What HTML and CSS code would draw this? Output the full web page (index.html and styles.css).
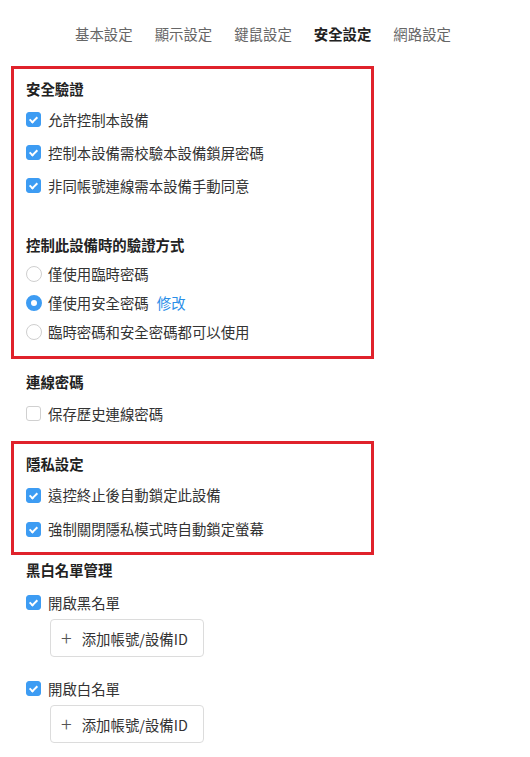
FILE: index.html
```html
<html>
    <head>
        <title>安全設定</title>
        <link rel="stylesheet" href="styles.css">
    </head>
    <body>
        <div class="tabs">
            <span class="tab">基本設定</span>
            <span class="tab">顯示設定</span>
            <span class="tab">鍵鼠設定</span>
            <span class="tab active">安全設定</span>
            <span class="tab">網路設定</span>
        </div>

        <div class="content">
            <!-- security verification -->
            <div class="group marked first">
                <div class="title">安全驗證</div>
                <label class="row"><span class="check on"></span>允許控制本設備</label>
                <label class="row"><span class="check on"></span>控制本設備需校驗本設備鎖屏密碼</label>
                <label class="row"><span class="check on"></span>非同帳號連線需本設備手動同意</label>

                <div class="title second">控制此設備時的驗證方式</div>
                <label class="row radioRow"><span class="radio"></span>僅使用臨時密碼</label>
                <label class="row radioRow"><span class="radio on"></span>僅使用安全密碼<a class="link">修改</a></label>
                <label class="row radioRow"><span class="radio"></span>臨時密碼和安全密碼都可以使用</label>
            </div>

            <!-- connection password -->
            <div class="group plain password">
                <div class="title">連線密碼</div>
                <label class="row"><span class="check"></span>保存歷史連線密碼</label>
            </div>

            <!-- privacy -->
            <div class="group marked privacy">
                <div class="title">隱私設定</div>
                <label class="row tall"><span class="check on"></span>遠控終止後自動鎖定此設備</label>
                <label class="row tall"><span class="check on"></span>強制關閉隱私模式時自動鎖定螢幕</label>
            </div>

            <!-- black / white list -->
            <div class="group plain lists">
                <div class="title">黑白名單管理</div>
                <label class="row"><span class="check on"></span>開啟黑名單</label>
                <div class="addButton"><span class="plus">+</span>添加帳號/設備ID</div>
                <label class="row spaced"><span class="check on"></span>開啟白名單</label>
                <div class="addButton"><span class="plus">+</span>添加帳號/設備ID</div>
            </div>
        </div>
    </body>
</html>
```

FILE: styles.css
```css
body{
    margin: 0;
    background: white;
    color: #333;
    font-family: "Noto Sans CJK TC", "Noto Sans", sans-serif;
    font-size: 14.4px;
}

.tabs{
    display: flex;
    justify-content: center;
    gap: 22px;
    padding-top: 24px;
    padding-right: 4px;
    line-height: 20px;
}

.tab{
    color: #666;
}

.tab.active{
    color: #222;
    font-weight: bold;
}

.content{
    padding-left: 11px;
    margin-top: 22px;
}

.group{
    width: 345px;
    padding-left: 12px;
}

.group.marked{
    border: 3px solid #e0222b;
}

.group.plain{
    border: 3px solid transparent;
}

.group.first{
    padding-top: 10px;
    padding-bottom: 10px;
}

.group.password{
    padding-top: 10px;
    padding-bottom: 8px;
}

.group.password .title{
    margin-bottom: 5px;
}

.group.privacy{
    padding-top: 10px;
    padding-bottom: 6px;
}

.group.lists{
    padding-top: 2px;
}

.group.lists .title{
    margin-bottom: 6px;
}

.title{
    font-weight: bold;
    color: #222;
    line-height: 20px;
    margin-bottom: 4px;
}

.title.second{
    margin-top: 33px;
}

.row{
    display: flex;
    align-items: center;
    height: 33px;
    line-height: 20px;
    color: #333;
}

.row.tall{
    height: 34px;
}

.row.radioRow{
    height: 29px;
}

.row.spaced{
    margin-top: 15px;
}

.check{
    width: 15px;
    height: 15px;
    box-sizing: border-box;
    border: 1px solid #d0d0d0;
    border-radius: 3px;
    background: white;
    margin-right: 7px;
    position: relative;
}

.check.on{
    background: #3d9cf3;
    border-color: #3d9cf3;
}

.check.on::after{
    content: "";
    position: absolute;
    left: 4px;
    top: 2px;
    width: 3px;
    height: 6px;
    border: solid white;
    border-width: 0 2px 2px 0;
    transform: rotate(45deg);
}

.radio{
    width: 16px;
    height: 16px;
    box-sizing: border-box;
    border: 1px solid #cfcfcf;
    border-radius: 50%;
    margin-right: 6px;
}

.radio.on{
    border: 5px solid #3d9cf3;
}

.link{
    color: #2a8ee8;
    margin-left: 8px;
}

.addButton{
    margin-left: 24px;
    width: 154px;
    height: 38px;
    box-sizing: border-box;
    border: 1px solid #dcdcdc;
    border-radius: 4px;
    display: flex;
    align-items: center;
    padding-left: 10px;
    color: #333;
}

.plus{
    font-size: 20px;
    font-weight: 300;
    color: #555;
    margin-right: 10px;
    line-height: 20px;
}
```
